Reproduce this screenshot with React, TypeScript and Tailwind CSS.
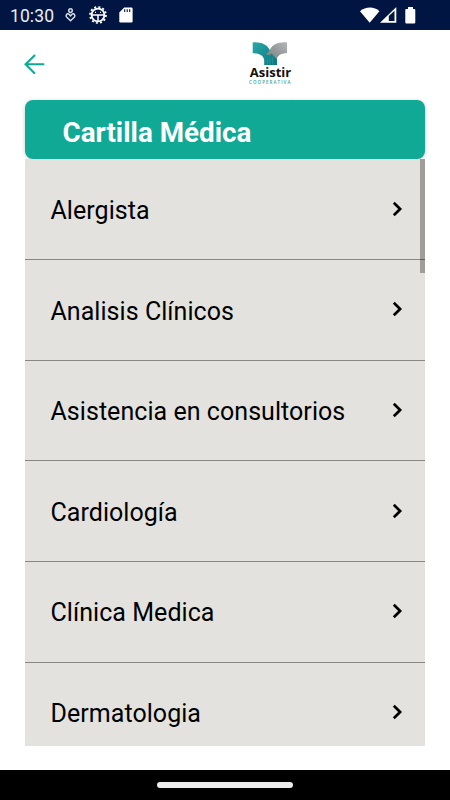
import React from "react";

const specialties = [
  "Alergista",
  "Analisis Clínicos",
  "Asistencia en consultorios",
  "Cardiología",
  "Clínica Medica",
  "Dermatologia",
];

function StatusBar() {
  return (
    <div className="flex h-[30px] shrink-0 items-center justify-between bg-[#001541] pr-[34px] pl-[10px] text-white">
      <div className="flex items-center">
        <span className="w-[53px] pt-px text-[17.5px] leading-[30px] tracking-[0.1px] text-[#e9edf5]">10:30</span>
        <svg className="h-[16px] w-[14px]" viewBox="0 0 14 16" fill="none" stroke="#d5dce8" strokeWidth="1.5">
          <circle cx="7.5" cy="3.6" r="1.8" />
          <path d="M7.5 13.7 3.8 10.3C1.8 8.4 4.5 5.8 6 7.2L7.5 8.8 9 7.2C10.5 5.8 13.2 8.4 11.2 10.3Z" />
        </svg>
        <svg className="ml-[12px] h-[18px] w-[18px]" viewBox="0 0 18 18" fill="none" stroke="white">
          <circle cx="9" cy="9" r="8" strokeWidth="1.7" strokeDasharray="2.1 2.09" />
          <circle cx="9" cy="9" r="6.4" strokeWidth="1.8" />
          <path d="M3 9H15M9 9V15" strokeWidth="1.5" />
          <path d="M6 6.3H7M11 6.3H12" strokeWidth="1.2" />
        </svg>
        <svg className="ml-[12px] h-[16px] w-[14px]" viewBox="0 0 14 16">
          <path d="M5.2.5H12.4Q13.6.5 13.6 1.7V14.3Q13.6 15.5 12.4 15.5H1.5Q.3 15.5.3 14.3V5.4Z" fill="white" />
          <path d="M5.7 2.3V5M8.2 2.3V5M10.7 2.3V5" stroke="#001541" strokeWidth="1.1" />
        </svg>
      </div>
      <div className="flex items-center">
        <svg className="h-[16px] w-[20px]" viewBox="0 0 20 16">
          <path d="M0 4.2C5.5-.8 14.5-.8 19.4 4.2L9.7 15.8Z" fill="white" />
        </svg>
        <svg className="h-[16px] w-[17px]" viewBox="0 0 17 16">
          <path d="M0 15.7 16.3 0V15.7ZM8.8 8.9V14H14.5V3.8Z" fill="white" fillRule="evenodd" />
        </svg>
        <svg className="ml-[8px] h-[17px] w-[11px]" viewBox="0 0 11 17">
          <path d="M3 2V0H8V2H9.2Q10.3 2 10.3 3.1V15.5Q10.3 16.6 9.2 16.6H1.4Q.3 16.6.3 15.5V3.1Q.3 2 1.4 2Z" fill="white" />
        </svg>
      </div>
    </div>
  );
}

function Logo() {
  return (
    <div className="w-[46px]" role="img" aria-label="Asistir Cooperativa">
      <svg className="block h-[25px] w-[46px]" viewBox="0 0 46 25">
        <defs>
          <linearGradient id="teal" x1="0" y1="0" x2="1" y2="1">
            <stop offset="0" stopColor="#2aa8a5" />
            <stop offset="1" stopColor="#087783" />
          </linearGradient>
          <linearGradient id="gray" x1="0" y1="1" x2="1" y2="0">
            <stop offset="0" stopColor="#777d7d" />
            <stop offset="1" stopColor="#b4b7b7" />
          </linearGradient>
        </defs>
        <path d="M4.7 2.4C13 1.8 19 4.5 21.8 10L29 18V25H16.2V20.5C16.2 15.5 11 13.2 4.7 13.2Z" fill="url(#teal)" />
        <path d="M39 2.4C30 1.8 24.5 4.5 21.8 10L18.4 14C18.8 15.8 21.8 15.2 23.6 13.4L28.7 19.2C29.6 15.3 33 13.2 39 13.2Z" fill="url(#gray)" />
        <path d="M19.5 24.5V19M22 24.5V17.5M24.5 24.5V17.5" stroke="#4ba4ab" strokeWidth=".4" />
      </svg>
      <div className="mt-px flex h-[12px] items-center pl-[1.8px] font-['Open_Sans',sans-serif] text-[13px] leading-[12px] font-bold text-[#101010]">Asistir</div>
      <div className="mt-[2px] flex h-[5px] items-center pl-[1px] font-['Open_Sans',sans-serif] text-[4.5px] leading-[5px] font-semibold tracking-[1.07px] text-[#38a5a3]">COOPERATIVA</div>
    </div>
  );
}

export default function App() {
  return (
    <div className="flex h-[800px] w-[450px] flex-col overflow-hidden bg-white font-['Roboto',sans-serif]">
      <StatusBar />
      <header className="flex h-[70px] shrink-0 items-start pt-[10px] pl-[24px]">
        <button aria-label="Volver" className="mt-[14px]">
          <svg className="block h-[20px] w-[21px]" viewBox="0 0 21 20" fill="none" stroke="#10a995" strokeWidth="2.1">
            <path d="M20.3 10.3H1.7M11 .9 1.6 10.3 11 19.7" />
          </svg>
        </button>
        <div className="ml-[203px]">
          <Logo />
        </div>
      </header>
      <main className="mx-[25px] flex h-[646px] shrink-0 flex-col">
        <h1 className="h-[59px] shrink-0 rounded-[8px] bg-[#10a995] pl-[37.5px] text-[27.8px] leading-[66px] font-bold text-white shadow-[0_1px_4px_rgba(0,0,0,0.2)]">
          Cartilla Médica
        </h1>
        <div className="relative mt-[0.4px] h-[586.4px] shrink-0 overflow-hidden bg-[#e4e2de]">
          <ul>
            {specialties.map((name) => (
              <li key={name} className="flex h-[100.65px] items-center justify-between border-b border-[#888784] pr-[22px] pl-[25.5px]">
                <span className="pt-[3.4px] text-[25px] leading-[30px] tracking-[0.05px] text-black">{name}</span>
                <svg className="mb-px h-[16px] w-[11px]" viewBox="0 0 11 16" fill="none" stroke="black" strokeWidth="2.7">
                  <path d="M1.8 1.8 8.1 8 1.8 14.2" />
                </svg>
              </li>
            ))}
          </ul>
          <div className="absolute top-0 right-0 h-[114px] w-[5px] bg-black/30" />
        </div>
      </main>
      <footer className="mt-auto flex h-[30px] shrink-0 items-center justify-center bg-black">
        <div className="h-[6px] w-[136px] rounded-full bg-[#ececec]" />
      </footer>
    </div>
  );
}
